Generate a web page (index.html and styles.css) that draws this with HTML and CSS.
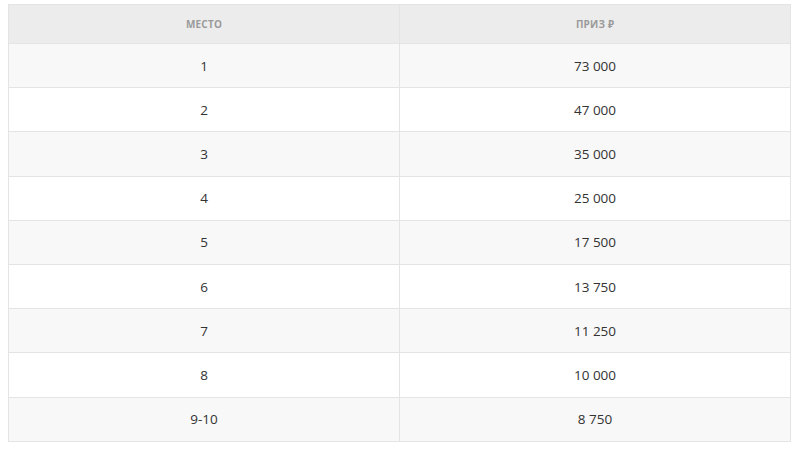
FILE: index.html
```html
<!DOCTYPE html>
<html lang="ru">
<head>
<meta charset="utf-8">
<link rel="stylesheet" href="styles.css">
</head>
<body>
<table class="prizes">
  <thead>
    <tr><th>Место</th><th>Приз ₽</th></tr>
  </thead>
  <tbody>
    <tr><td>1</td><td>73 000</td></tr>
    <tr><td>2</td><td>47 000</td></tr>
    <tr><td>3</td><td>35 000</td></tr>
    <tr><td>4</td><td>25 000</td></tr>
    <tr><td>5</td><td>17 500</td></tr>
    <tr><td>6</td><td>13 750</td></tr>
    <tr><td>7</td><td>11 250</td></tr>
    <tr><td>8</td><td>10 000</td></tr>
    <tr><td>9-10</td><td>8 750</td></tr>
  </tbody>
</table>
</body>
</html>
```
FILE: styles.css
```css
html, body { background: #fff; }
body {
  margin: 4px 9px 0 8px;
  font-family: "Open Sans", "Noto Sans", sans-serif;
}
.prizes {
  width: 783px;
  border-collapse: collapse;
  border: 1px solid #e4e4e4;
  table-layout: fixed;
}
.prizes th, .prizes td {
  border: 1px solid #e4e4e4;
  text-align: center;
  padding: 0;
}
.prizes th {
  background: #ececec;
  height: 38px;
  font-size: 10px;
  font-weight: 700;
  color: #9a9a9a;
  text-transform: uppercase;
  letter-spacing: 0.2px;
}
.prizes th:first-child, .prizes td:first-child { width: 390px; }
.prizes td {
  height: 43.2px;
  font-size: 13.5px;
  color: #333;
}
.prizes tbody tr:nth-child(odd) td { background: #f8f8f8; }
.prizes tbody tr:nth-child(even) td { background: #fff; }
```
